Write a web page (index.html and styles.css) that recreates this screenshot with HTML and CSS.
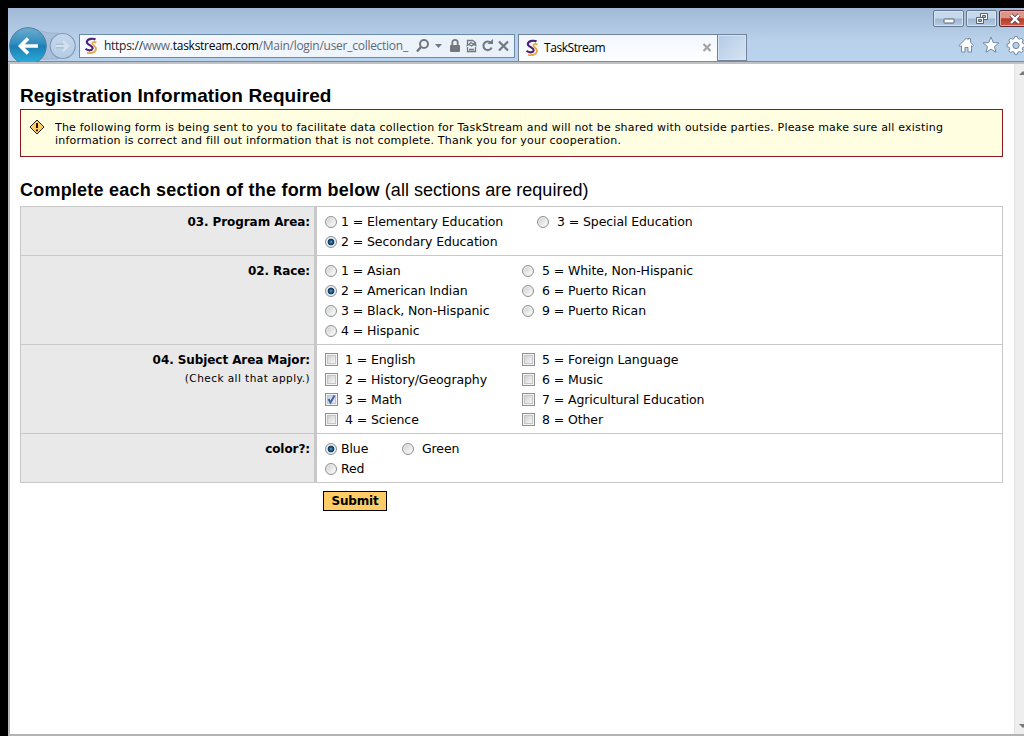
FILE: index.html
```html
<!DOCTYPE html>
<html lang="en">
<head>
<meta charset="utf-8">
<title>TaskStream</title>
<link rel="stylesheet" href="styles.css">
</head>
<body>
<svg class="defs" width="0" height="0" aria-hidden="true">
  <symbol id="logo" viewBox="0 0 14 18">
    <path d="M11.500 2.500C9.500 1.200 3.500 1.300 2.800 4.800 2.400 7.800 9.300 8.500 8.600 11.500 8 13.800 4 14 1.500 11.800" fill="none" stroke="#4a2378" stroke-width="2.100"/>
    <path d="M12.300 5.800C11 4.700 8.200 4.600 8.200 6.500 8.300 8.300 12.300 9 12 12 11.600 15.600 7 16.800 3 15.800" fill="none" stroke="#e9a843" stroke-width="1.800"/>
  </symbol>
</svg>
<div class="window">
  <header class="chrome">
    <div class="caption">
      <button class="cap-btn" aria-label="Minimize"><svg width="12" height="12" viewBox="0 0 12 12"><rect x="1" y="6" width="10" height="4" rx=".5" fill="#fff" stroke="#536477"/></svg></button>
      <button class="cap-btn" aria-label="Restore"><svg width="12" height="12" viewBox="0 0 12 12"><path d="M4.500.5h7v6h-7z" fill="#fff" stroke="#536477"/><path d="M6.500 2.500h3v2h-3z" fill="#9fb5cf" stroke="#536477"/><path d="M.5 4.500h7v6h-7z" fill="#fff" stroke="#536477"/><path d="M2.500 6.500h3v2h-3z" fill="#9fb5cf" stroke="#536477"/></svg></button>
      <button class="cap-btn close" aria-label="Close"><svg width="14" height="12" viewBox="0 0 14 12"><path d="M3 2l8 8M11 2l-8 8" stroke="#5a4048" stroke-width="4"/><path d="M3 2l8 8M11 2l-8 8" stroke="#fff" stroke-width="2.400"/></svg></button>
    </div>
    <div class="toolbar">
      <svg class="nav" width="69" height="36" viewBox="0 0 69 36">
        <defs>
          <linearGradient id="back" x1="0" y1="0" x2="0" y2="1"><stop offset="0" stop-color="#6dacce"/><stop offset=".45" stop-color="#2f8bbc"/><stop offset=".5" stop-color="#1b7db3"/><stop offset="1" stop-color="#2cb1df"/></linearGradient>
          <linearGradient id="fwd" x1="0" y1="0" x2="0" y2="1"><stop offset="0" stop-color="#c5d8ec"/><stop offset="1" stop-color="#b4cbe4"/></linearGradient>
        </defs>
        <path d="M20 2C32 3 36 8 50 7V33H30Z" fill="#a9bfda" stroke="#9db4cf"/>
        <circle cx="20" cy="20" r="18.300" fill="url(#back)" stroke="#4a7fa5"/>
        <path d="M30 20H12.500M20 12.500L12.500 20l7.500 7.500" fill="none" stroke="#fff" stroke-width="3.600"/>
        <circle cx="54.700" cy="20" r="12.500" fill="url(#fwd)" stroke="#8299b8" stroke-width="1.200"/>
        <path d="M48 18.300h7.500M48 21.700h7.500M54 14l6.500 6-6.500 6" fill="none" stroke="#94aecb"/>
        <path d="M48 20h11M54.500 14.500l5.500 5.500-5.500 5.500" fill="none" stroke="#d3e1f0" stroke-width="2.400"/>
      </svg>
      <div class="address">
        <svg class="logo" width="14" height="18"><use href="#logo"/></svg>
        <div class="url">https://<span class="dim">www.</span><span class="host">taskstream.com</span><span class="path">/Main/login/user_collection_</span></div>
        <svg class="tools" width="96" height="18" viewBox="0 0 96 18" fill="none" stroke="#737880">
          <circle cx="8" cy="7" r="4" stroke-width="2"/><path d="M5 10L1 14.500" stroke-width="2.500"/>
          <path d="M19 7h7l-3.500 4z" fill="#737880" stroke="none"/>
          <rect x="34" y="8" width="10" height="7" rx="1" fill="#737880" stroke="none"/><path d="M36.300 8V5.500a2.700 2.700 0 015.400 0V8" stroke-width="1.800"/>
          <path d="M51.500 8V3.500h5l3 2V8M51.500 10v4.500h8V10M53 7l2-1.500L57 7l2-1M50.500 9l2.500-1.500L55.500 9 58 7.500 60.500 9M53 12.500h5" stroke-width="1.300"/>
          <path d="M75 6a4.300 4.300 0 10.700 4.500" stroke-width="2"/><path d="M71.500 7h5.500V2z" fill="#737880" stroke="none"/>
          <path d="M83 4.500l9 9M92 4.500l-9 9" stroke-width="2.200"/>
        </svg>
      </div>
      <div class="tab">
        <svg class="logo" width="14" height="18"><use href="#logo"/></svg>
        <span class="tab-title">TaskStream</span>
        <svg width="10" height="10" viewBox="0 0 10 10"><path d="M1.500 1l7 7M8.500 1l-7 7" stroke="#a3a3a3" stroke-width="2.200"/></svg>
      </div>
      <div class="new-tab"></div>
      <svg class="commands" width="66" height="20" viewBox="0 0 66 20" fill="#fff" stroke="#7389a5">
        <path d="M1 10.500L8.500 3l1.500 1.500V3.500h2.500V7l3 3.500-1 1-1-.8V17H10v-4.500H7V17H3.500v-6.300l-1.200.8z"/>
        <path d="M33 2l2.200 5.500 5.800.4-4.500 3.700 1.500 5.700-5-3.200-5 3.200 1.500-5.700L25 7.900l5.800-.4z"/>
        <path d="M56.700 2.500h2.600l.6 2 1.600.7 1.900-1 1.800 1.900-1 1.900.7 1.600 2 .6v2.500l-2 .6-.7 1.600 1 1.900-1.800 1.800-1.900-1-1.600.7-.6 2h-2.600l-.6-2-1.600-.7-1.900 1-1.800-1.800 1-1.900-.7-1.600-2-.6v-2.500l2-.6.7-1.600-1-1.900 1.800-1.900 1.900 1 1.600-.7z" transform="translate(0 -1)"/>
        <circle cx="58" cy="10.400" r="3.200" fill="#b5cde8"/>
      </svg>
    </div>
  </header>
  <div class="viewport">
    <main class="page">
      <h1 class="title">Registration Information Required</h1>
      <div class="notice">
        <svg width="16" height="16" viewBox="0 0 16 16"><path d="M8 1l7 7-7 7-7-7z" fill="#fc6" stroke="#222"/><path d="M8 4v5M8 10.500v1.800" stroke="#221500" stroke-width="2"/></svg>
        <p class="notice-text">The following form is being sent to you to facilitate data collection for TaskStream and will not be shared with outside parties. Please make sure all existing<br>information is correct and fill out information that is not complete. Thank you for your cooperation.</p>
      </div>
      <h2 class="subtitle">Complete each section of the form below <span class="light">(all sections are required)</span></h2>
      <form class="form">
        <section class="row">
          <div class="label">03. Program Area:</div>
          <div class="options two wide">
            <label><i class="radio"></i>1 = Elementary Education</label>
            <label><i class="radio on"></i>2 = Secondary Education</label>
            <label class="far"><i class="radio"></i>3 = Special Education</label>
          </div>
        </section>
        <section class="row">
          <div class="label">02. Race:</div>
          <div class="options four">
            <label><i class="radio"></i>1 = Asian</label>
            <label><i class="radio on"></i>2 = American Indian</label>
            <label><i class="radio"></i>3 = Black, Non-Hispanic</label>
            <label><i class="radio"></i>4 = Hispanic</label>
            <label class="far"><i class="radio"></i>5 = White, Non-Hispanic</label>
            <label class="far"><i class="radio"></i>6 = Puerto Rican</label>
            <label class="far"><i class="radio"></i>9 = Puerto Rican</label>
          </div>
        </section>
        <section class="row">
          <div class="label">04. Subject Area Major:<div class="hint">(Check all that apply.)</div></div>
          <div class="options four checks">
            <label><i class="check"></i>1 = English</label>
            <label><i class="check"></i>2 = History/Geography</label>
            <label><i class="check on"><svg width="11" height="11" viewBox="0 0 11 11"><path d="M2.500 5l2 3.500L8.500 1.500" fill="none" stroke="#45619f" stroke-width="2"/></svg></i>3 = Math</label>
            <label><i class="check"></i>4 = Science</label>
            <label><i class="check"></i>5 = Foreign Language</label>
            <label><i class="check"></i>6 = Music</label>
            <label><i class="check"></i>7 = Agricultural Education</label>
            <label><i class="check"></i>8 = Other</label>
          </div>
        </section>
        <section class="row">
          <div class="label">color?:</div>
          <div class="options two narrow">
            <label><i class="radio on"></i>Blue</label>
            <label><i class="radio"></i>Red</label>
            <label class="far"><i class="radio"></i>Green</label>
          </div>
        </section>
        <button class="submit" type="button">Submit</button>
      </form>
    </main>
    <aside class="scrollbar">
      <svg width="10" height="6" viewBox="0 0 10 6"><path d="M4 5l4-4 4 4z" fill="#777"/></svg>
      <svg width="10" height="6" viewBox="0 0 10 6"><path d="M4 1l4 4 4-4z" fill="#777"/></svg>
    </aside>
  </div>
</div>
</body>
</html>
```
FILE: styles.css
```css
* { box-sizing: border-box; }
body { margin: 0; width: 1024px; height: 736px; background: #000; overflow: hidden; color: #000; font-family: "DejaVu Sans", Verdana, sans-serif; }
.defs { position: absolute; }
svg { display: block; flex: none; }
.window { margin: 8px 0 0 8px; width: 1016px; height: 728px; display: flex; flex-direction: column; }
.chrome { flex: none; height: 56px; background: linear-gradient(#a0b9d6, #b9d1ea 60%, #bad3ed); border-bottom: 2px solid #bfc1c4; box-shadow: inset 0 -1px #818b98; overflow: hidden; }
.caption { height: 18px; display: flex; justify-content: flex-end; gap: 2px; margin-right: -6px; padding-top: 2px; }
.cap-btn { width: 31px; height: 17px; padding: 0; display: flex; align-items: center; justify-content: center; border: 1px solid #65788f; border-radius: 2px; background: linear-gradient(#c7d8eb 0 48%, #9db6d2 52%, #b5cce5); box-shadow: inset 0 0 0 1px #d5e3f2; }
.cap-btn.close { border-color: #5b2632; background: linear-gradient(#dd9588 0 45%, #bb3826 52%, #d05a42); box-shadow: inset 0 0 0 1px #e6aa9e; }
.toolbar { display: flex; height: 36px; align-items: flex-start; }
.nav { margin-right: 2px; }
.address { width: 436px; height: 24px; margin-top: 8px; display: flex; align-items: center; padding-left: 4px; border: 1px solid #6989ad; background: linear-gradient(90deg, #f8fbff, #e8f0f9); }
.url { width: 312px; margin-left: 6px; white-space: nowrap; font: 12px/20px "Open Sans", sans-serif; letter-spacing: -.27px; color: #222; }
.dim, .path { color: #626975; }
.host { color: #000; }
.tab { width: 200px; height: 27px; margin: 8px 0 0 3px; display: flex; align-items: center; padding: 0 5px 0 6px; border: 1px solid #71829a; border-bottom: 0; background: linear-gradient(#f2f7fd, #fff); }
.tab-title { width: 159px; padding-left: 5px; margin-right: 5px; font: 12px/18px "Open Sans", sans-serif; letter-spacing: -.45px; }
.new-tab { width: 29px; height: 27px; margin-top: 8px; border: 1px solid #71829a; border-left: 0; background: linear-gradient(135deg, #b2cae5, #d6e4f2); box-shadow: inset 0 0 0 1px #d5e4f4; }
.commands { margin: 9px 0 0 211px; }
.viewport { flex: 1; display: flex; border-left: 2px solid #b9b9b9; border-bottom: 2px solid #b3b3b3; background: #fff; }
.page { width: 1004px; flex: none; padding: 20px 11px 0 10px; }
.scrollbar { flex: 1; display: flex; flex-direction: column; justify-content: space-between; padding: 6px 0 5px; border-left: 1px solid #e2e2e2; background: #eeeeef; overflow: hidden; }
.title, .subtitle { margin: 0; font: bold 19px/24px "Liberation Sans", Arial, sans-serif; white-space: nowrap; }
.title { height: 25px; letter-spacing: .1px; }
.subtitle { margin-top: 21px; height: 28px; font-size: 18px; letter-spacing: .22px; }
.light { font-weight: normal; letter-spacing: .02px; }
.notice { height: 48px; display: flex; gap: 10px; padding: 9px 8px; border: 1px solid #8b1720; background: #fffee0; }
.notice-text { margin: 2px 0 0; font-size: 11px; line-height: 13px; letter-spacing: .205px; white-space: nowrap; }
.form { width: 983px; }
.row { display: flex; border: 1px solid #c8c8c8; border-bottom: 0; }
.row:nth-child(4) { border-bottom: 1px solid #c8c8c8; }
.label { width: 296px; padding: 5px 4px 0 0; border-right: 3px solid #c8c8c8; background: #e9e9e9; text-align: right; font-size: 12px; font-weight: bold; letter-spacing: -.08px; line-height: 20px; }
.hint { font-size: 10.500px; font-weight: normal; line-height: 16px; letter-spacing: .45px; }
.options { flex: 1; display: grid; grid-auto-flow: column; grid-auto-rows: 20px; grid-template-columns: 197px 1fr; padding: 5px 0 3px 8px; font-size: 12.500px; letter-spacing: -.1px; line-height: 20px; white-space: nowrap; }
.options.wide { grid-template-columns: 212px 1fr; }
.options.narrow { grid-template-columns: 77px 1fr; }
.two { grid-template-rows: repeat(2, 20px); }
.four { grid-template-rows: repeat(4, 20px); }
.options label { display: flex; align-items: center; gap: 4px; }
.options label.far { gap: 8px; }
.checks label { gap: 7px; }
.radio { width: 12px; height: 12px; border: 1px solid #8e8f8f; border-radius: 50%; background: linear-gradient(135deg, #c9ccd0, #f6f6f6 80%); box-shadow: inset 0 0 0 1px #f0f0f0; }
.radio.on { background: radial-gradient(circle at 50% 50%, #56a6cf 0, #174a75 2px, #16395c 3px, #d3e3ee 3.700px); }
.check { width: 13px; height: 13px; margin-bottom: 1px; border: 1px solid #8e8f8f; background: linear-gradient(135deg, #c4c8cc, #f6f6f6 85%); box-shadow: inset 0 0 0 1px #f4f4f4, inset 0 0 0 2px #c3c5c8; }
.check.on { background: linear-gradient(135deg, #bfcbe6, #eef2fb); }
.submit { display: block; width: 64px; height: 20px; margin: 8px 0 0 303px; padding: 0; border: 1px solid #000; background: #fc6; font: bold 12px/17px "DejaVu Sans", sans-serif; letter-spacing: -.2px; color: #000; }
```
